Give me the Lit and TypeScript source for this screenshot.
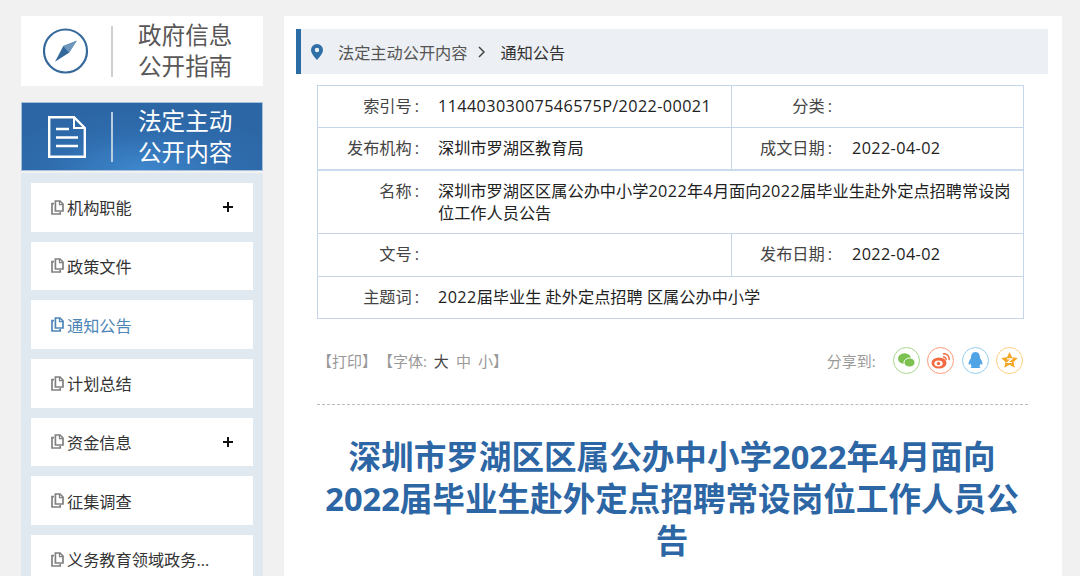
import { LitElement, html, css } from "lit";
import { customElement } from "lit/decorators.js";

const docIcon = html`<svg class="doc" viewBox="0 0 13 15" width="13" height="15" fill="none" stroke="currentColor">
  <path d="M4.400 1H9l3 3v7H4.400z" stroke-width="1.700"/>
  <path d="M8.500 1v3.600H12" stroke-width="1.300"/>
  <path d="M3 3.600H1V14h8.200v-2" stroke-width="1.700"/>
</svg>`;

const nav = [
  { t: "机构职能", plus: true },
  { t: "政策文件" },
  { t: "通知公告", active: true },
  { t: "计划总结" },
  { t: "资金信息", plus: true },
  { t: "征集调查" },
  { t: "义务教育领域政务..." },
];

const num = (s: string) =>
  s.split(/([0-9A-Z\/\-]+)/).map((p, i) => (i % 2 ? html`<span class="n">${p}</span>` : p));

const key = (s: string) => html`<div class="k">${s}<i>:</i></div>`;

@customElement("app-root")
export class AppRoot extends LitElement {
  static styles = css`
    :host {
      display: block;
      width: 1080px;
      height: 576px;
      overflow: hidden;
      background: #f1f1f1;
      font-family: "Open Sans", "Noto Sans CJK SC", sans-serif;
      color: #222;
      font-size: 16.200px;
    }
    .page {
      display: flex;
      gap: 21px;
      padding: 16px 18px 0 21px;
      height: 560px;
      align-items: stretch;
    }
    .side { width: 242px; flex: none; display: flex; flex-direction: column; }
    .head {
      display: flex;
      flex: none;
      align-items: center;
      font-size: 23.600px;
      line-height: 31px;
    }
    .head .ic { width: 90px; display: flex; justify-content: center; flex: none; }
    .head .sep { width: 2px; height: 51px; background: #cfcfcf; flex: none; }
    .head .txt { margin-left: 25px; }
    .logo { background: #fff; height: 70px; color: #595757; }
    .blue {
      margin-top: 16px;
      height: 69px;
      color: #fff;
      box-sizing: border-box;
      border: 1px solid #a6c1dc;
      background: radial-gradient(ellipse 150px 60px at 50% 100%, #3e87cd 0%, #2f6dae 60%, #2c66a5 100%);
    }
    .blue .ic { width: 89px; }
    .blue .sep { background: #b9cde2; height: 50px; }
    .list {
      margin-top: 2px;
      flex: 1;
      background: #e0e9ef;
      padding: 10px 10px 0;
      display: flex;
      flex-direction: column;
      gap: 10px;
    }
    .item {
      background: #fff;
      height: 48.670px;
      flex: none;
      display: flex;
      align-items: center;
      padding: 0 20px;
      color: #333;
    }
    .item .doc { color: #808080; margin-right: 3px; flex: none; }
    .item.active { color: #4f86b8; }
    .item.active .doc { color: #4f86b8; }
    .item .plus { margin-left: auto; width: 10px; height: 10px; }
    .main {
      flex: 1;
      background: #fff;
      padding: 13px 14px 0 12px;
      min-width: 0;
    }
    .crumb {
      height: 45px;
      box-sizing: border-box;
      background: #eceff3;
      border-left: 5px solid #2c6ca5;
      display: flex;
      align-items: center;
      padding-left: 10px;
      color: #555;
    }
    .crumb .pin { margin-right: 15px; }
    .crumb .chev { margin: 0 16px 0 10px; }
    .crumb .cur { color: #333; }
    .tbl {
      margin: 11px 24px 0 21px;
      border: 1px solid #c5d6e8;
      line-height: 21.200px;
      color: #222;
    }
    .n { letter-spacing: 0.400px; }
    .row { display: flex; border-top: 1px solid #c5d6e8; align-items: stretch; }
    .row:first-child { border-top: 0; }
    .row.thick { border-top: 2px solid #c9dbec; line-height: 22px; }
    .cell { display: flex; }
    .cell.a { width: 413px; flex: none; }
    .cell.b { flex: 1; border-left: 1px solid #c5d6e8; }
    .k { color: #444; text-align: right; flex: none; box-sizing: border-box; padding: 10px 0; }
    .k i { font-style: normal; padding-left: 3px; }
    .a .k, .full .k { width: 101px; }
    .b .k { width: 100px; }
    .v { padding: 10px 0 10px 19px; }
    .b .v { padding-left: 20px; }
    .thick .k { padding: 9px 0; }
    .thick .v { padding-top: 9px; padding-bottom: 9px; }
    .full { flex: 1; }
    .tools {
      margin: 0 20px 0 21px;
      height: 86px;
      box-sizing: border-box;
      border-bottom: 1px dashed #bbb;
      display: flex;
      align-items: center;
      color: #999;
      font-size: 15px;
      padding: 0 5px 2px 0;
    }
    .tools .fs span { margin-left: 7px; color: #999; }
    .tools .fs span.big { color: #444; margin-left: 3px; }
    .tools .gap { margin-left: 1px; }
    .share { margin-left: auto; display: flex; align-items: center; gap: 7.300px; }
    .share .lbl { margin-right: 10px; }
    .circ {
      width: 27px;
      height: 27px;
      box-sizing: border-box;
      border-radius: 50%;
      border: 1.200px solid;
      display: flex;
      align-items: center;
      justify-content: center;
    }
    h1 {
      margin: 31px auto 0;
      width: 720px;
      text-align: center;
      color: #2c66a4;
      font-size: 32.600px;
      line-height: 42px;
      font-weight: 700;
    }
  `;

  render() {
    return html`<div class="page">
      <aside class="side">
        <div class="head logo">
          <div class="ic">
            <svg width="46" height="46" viewBox="0 0 46 46" fill="none">
              <circle cx="22.500" cy="23" r="21.500" stroke="#35699b" stroke-width="2.200"/>
              <path d="M33.700 12.700 L26 24.700 L12 33.700 L20.300 18Z" fill="#35699b"/>
              <path d="M20.300 18 L33.700 12.700 L26 24.700Z" fill="#6f96bd"/>
            </svg>
          </div>
          <div class="sep"></div>
          <div class="txt">政府信息<br />公开指南</div>
        </div>
        <div class="head blue">
          <div class="ic">
            <svg width="38" height="42" viewBox="0 0 38 42" fill="none" stroke="#fff" stroke-width="2.400">
              <path d="M1.200 1.200H26L36.800 12V40.800H1.200Z"/>
              <path d="M26 1.200V12H36.800" stroke-width="2"/>
              <path d="M8 13H21M8 21.500H30M8 30H30" stroke-width="2.400"/>
            </svg>
          </div>
          <div class="sep"></div>
          <div class="txt">法定主动<br />公开内容</div>
        </div>
        <nav class="list">
          ${nav.map(
            (n) => html`<div class="item ${n.active ? "active" : ""}">
              ${docIcon}<span>${n.t}</span>
              ${n.plus
                ? html`<svg class="plus" viewBox="0 0 10 10"><path d="M5 0v10M0 5h10" stroke="#111" stroke-width="2"/></svg>`
                : ""}
            </div>`
          )}
        </nav>
      </aside>
      <main class="main">
        <div class="crumb">
          <svg class="pin" width="12" height="16" viewBox="0 0 12 16">
            <path fill-rule="evenodd" fill="#2f6fa7" d="M6 0a6 6 0 0 1 6 6c0 3.600-4 7.500-6 10C4 13.500 0 9.600 0 6a6 6 0 0 1 6-6zm0 3.800a2.200 2.200 0 1 0 0 4.400 2.200 2.200 0 0 0 0-4.400z"/>
          </svg>
          <span>法定主动公开内容</span>
          <svg class="chev" width="7" height="12" viewBox="0 0 7 12" fill="none"><path d="M1 1l5 5-5 5" stroke="#444" stroke-width="1.500"/></svg>
          <span class="cur">通知公告</span>
        </div>
        <div class="tbl">
          <div class="row">
            <div class="cell a">${key("索引号")}<div class="v">${num("11440303007546575P/2022-00021")}</div></div>
            <div class="cell b">${key("分类")}<div class="v"></div></div>
          </div>
          <div class="row">
            <div class="cell a">${key("发布机构")}<div class="v">深圳市罗湖区教育局</div></div>
            <div class="cell b">${key("成文日期")}<div class="v">${num("2022-04-02")}</div></div>
          </div>
          <div class="row thick">
            <div class="cell full">${key("名称")}<div class="v">${num("深圳市罗湖区区属公办中小学2022年4月面向2022届毕业生赴外定点招聘常设岗")}<br />位工作人员公告</div></div>
          </div>
          <div class="row">
            <div class="cell a">${key("文号")}<div class="v"></div></div>
            <div class="cell b">${key("发布日期")}<div class="v">${num("2022-04-02")}</div></div>
          </div>
          <div class="row">
            <div class="cell full">${key("主题词")}<div class="v">${num("2022届毕业生 赴外定点招聘 区属公办中小学")}</div></div>
          </div>
        </div>
        <div class="tools">
          <span>【打印】</span>
          <span class="fs gap">【字体:<span class="big"> 大</span><span>中</span><span>小</span>】</span>
          <div class="share">
            <span class="lbl">分享到:</span>
            <div class="circ" style="border-color:#a5d88a">
              <svg width="17" height="15" viewBox="0 0 17 15"><ellipse cx="6.500" cy="5.500" rx="6.500" ry="5.300" fill="#7cc14f"/><ellipse cx="11.500" cy="9.500" rx="5.500" ry="4.500" fill="#7cc14f" stroke="#fff" stroke-width="1"/></svg>
            </div>
            <div class="circ" style="border-color:#ff9a78">
              <svg width="19" height="17" viewBox="0 0 19 17" fill="none"><ellipse cx="8" cy="11" rx="7.500" ry="5.500" fill="#f2693f"/><ellipse cx="7.500" cy="11.500" rx="4.200" ry="3" fill="#fff"/><circle cx="7.500" cy="11.500" r="1.700" fill="#f2693f"/><path d="M12 2a5 5 0 0 1 6 6M12 5a2.500 2.500 0 0 1 3 3" stroke="#f2693f" stroke-width="1.500"/></svg>
            </div>
            <div class="circ" style="border-color:#93cdf2">
              <svg width="15" height="17" viewBox="0 0 15 17"><path fill="#4fa4e6" d="M7.500 0C11 0 12 3 12 6c1.500 2 3 5 2.300 6.500-.4.500-1.300-.5-1.800-1.300 0 1.300-.5 2.300-1.300 3 1 .5 1.300 1.300.8 1.800H3c-.5-.5-.2-1.300.8-1.800-.8-.7-1.300-1.700-1.300-3-.5.800-1.400 1.800-1.800 1.300C0 11 1.500 8 3 6c0-3 1-6 4.500-6z"/></svg>
            </div>
            <div class="circ" style="border-color:#ffcf7f">
              <svg width="17" height="16" viewBox="0 0 17 16"><path fill="#f6a623" d="M8.500 0l2.500 5.300 5.800.7-4.300 4 1.200 5.800-5.200-3-5.200 3 1.200-5.800L.2 6 6 5.300z"/><path d="M6 6.800h5L6.500 10.500h4.500" fill="none" stroke="#fff" stroke-width="1.200"/></svg>
            </div>
          </div>
        </div>
        <h1>深圳市罗湖区区属公办中小学2022年4月面向<br />2022届毕业生赴外定点招聘常设岗位工作人员公<br />告</h1>
      </main>
    </div>`;
  }
}
